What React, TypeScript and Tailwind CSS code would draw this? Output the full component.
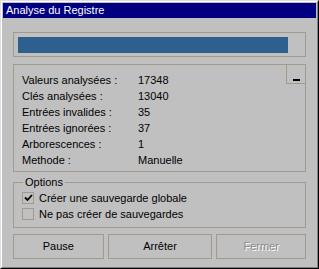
import React from "react";

// ligne de statistique
const rows: [string, string][] = [
  ["Valeurs analysées :", "17348"],
  ["Clés analysées :", "13040"],
  ["Entrées invalides :", "35"],
  ["Entrées ignorées :", "37"],
  ["Arborescences :", "1"],
  ["Methode :", "Manuelle"],
];

function Check({ checked }: { checked?: boolean }) {
  return (
    <span className="w-[12px] h-[12px] border border-[#a3998c] bg-[#c0c0c0] flex items-center justify-center">
      {checked && (
        <svg width="9" height="8" viewBox="0 0 9 8">
          <path d="M1 3.5 L3.5 6 L8 1" stroke="black" strokeWidth="1.8" fill="none" />
        </svg>
      )}
    </span>
  );
}

export default function App() {
  return (
    <div
      className="w-[319px] h-[269px] border border-t-[#dfdfdf] border-l-[#dfdfdf] border-r-black border-b-black bg-[#c0c0c0] text-[11px] text-black"
      style={{ fontFamily: '"Liberation Sans", Arial, sans-serif' }}
    >
      <div className="h-full border border-t-white border-l-white border-r-[#808080] border-b-[#808080] p-px flex flex-col">
        {/* barre de titre */}
        <div className="h-[15px] bg-[#000080] text-white text-[11px] leading-[15px] pl-[3px]">
          Analyse du Registre
        </div>

        <div className="px-[10px] flex flex-col">
          {/* progression */}
          <div className="mt-[14px] h-[25px] border border-[#a3998c] pl-[4px] pt-[4px]">
            <div className="w-[270px] h-[16px] bg-[#2d5f8f]" />
          </div>

          {/* statistiques */}
          <div className="relative mt-[7px] h-[108px] border border-[#a3998c] pl-[8px] pt-[7px]">
            <div className="absolute top-[-1px] right-[-1px] w-[20px] h-[20px] border border-[#a3998c] flex items-end justify-center pb-[2px]">
              <span className="w-[7px] h-[2px] bg-black" />
            </div>
            {rows.map(([label, value]) => (
              <div key={label} className="flex h-[16px] items-center">
                <span className="w-[116px]">{label}</span>
                <span>{value}</span>
              </div>
            ))}
          </div>

          {/* options */}
          <fieldset className="mt-[3px] h-[53px] border border-[#a3998c] px-[8px] pt-[1px]">
            <legend className="px-[2px] ml-[1px] leading-[14px]">Options</legend>
            <div className="flex flex-col">
              <label className="flex items-center gap-[5px] h-[16px]">
                <Check checked />
                Créer une sauvegarde globale
              </label>
              <label className="flex items-center gap-[5px] h-[16px]">
                <Check />
                Ne pas créer de sauvegardes
              </label>
            </div>
          </fieldset>

          {/* boutons */}
          <div className="mt-[6px] flex gap-[4px]">
            <button className="w-[91px] h-[25px] border border-[#a3998c] bg-[#c0c0c0]">Pause</button>
            <button className="w-[105px] h-[25px] border border-[#a3998c] bg-[#c0c0c0]">Arrêter</button>
            <button className="w-[90px] h-[25px] border border-[#a3998c] bg-[#c0c0c0] text-[#8a8a8a] [text-shadow:1px_1px_0_white]">
              Fermer
            </button>
          </div>
        </div>
      </div>
    </div>
  );
}
